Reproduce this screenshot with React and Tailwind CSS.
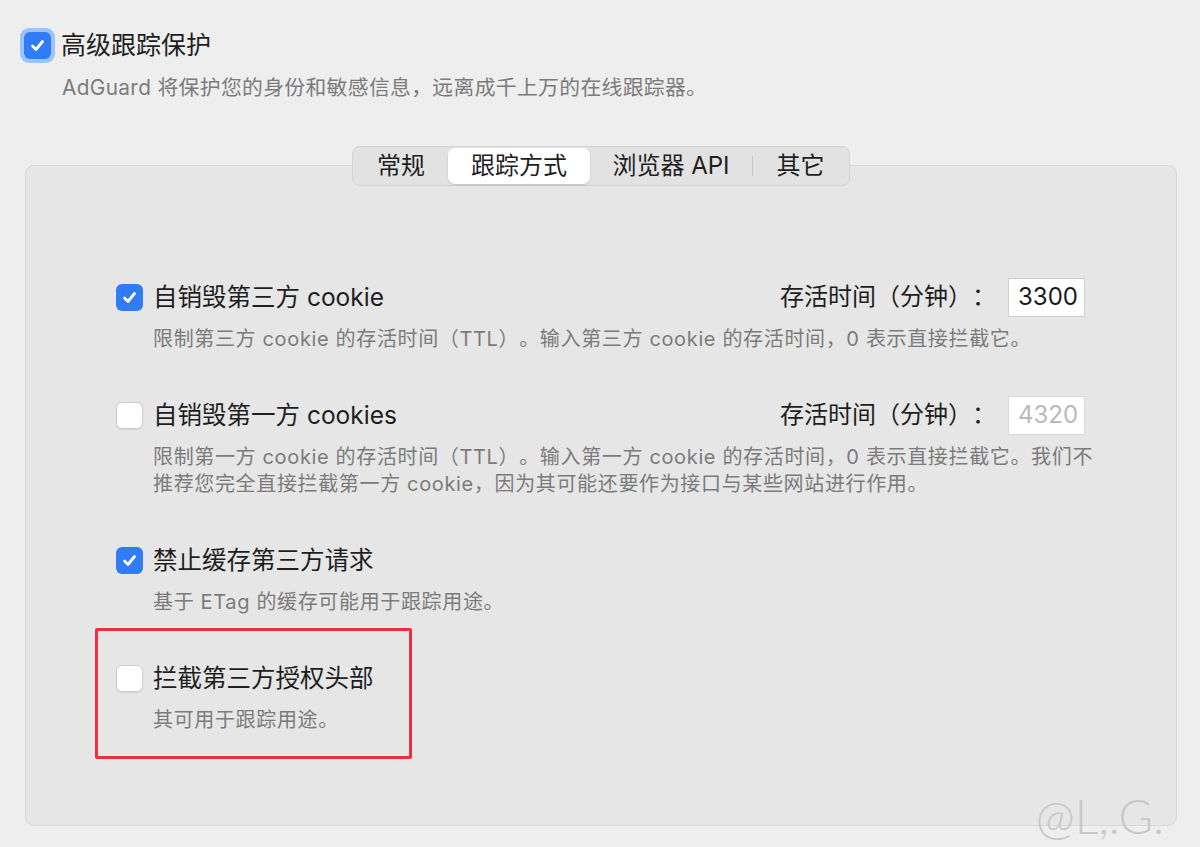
import React from "react";

const FONT = { fontFamily: '"Inter", "Noto Sans CJK SC", sans-serif', textSpacingTrim: "space-all" };

function Check({ checked, focus }) {
  if (checked) {
    return (
      <div className={focus ? "rounded-[9px] bg-[#9cc3fa] p-[4px]" : ""}>
        <div className="flex h-[27px] w-[27px] items-center justify-center rounded-[6px] bg-[#2f7cf6]">
          <svg width="17" height="17" viewBox="0 0 17 17" fill="none">
            <path d="M3.5 9 L7 12.5 L13.5 4.5" stroke="white" strokeWidth="2.8" strokeLinecap="round" strokeLinejoin="round" />
          </svg>
        </div>
      </div>
    );
  }
  return <div className="h-[27px] w-[27px] rounded-[6px] border border-[#cdcdcd] bg-white shadow-[0_0.5px_1px_rgba(0,0,0,0.08)]" />;
}

function Item({ checked, label, desc, ttl, ttlDisabled, children }) {
  return (
    <div className="relative">
      <div className="flex h-[30px] items-center">
        <div className="w-[37px] shrink-0">
          <Check checked={checked} />
        </div>
        <div className="text-[24.5px] leading-[30px] text-[#1e1e1e]">{label}</div>
        {ttl && (
          <div className="ml-auto flex items-center">
            <span className="text-[24px] leading-[30px] text-[#1e1e1e]">存活时间（分钟）：</span>
            <div
              className={
                "ml-[12px] flex h-[39px] w-[77px] shrink-0 items-center border bg-white pl-[9px] text-[24px] " +
                (ttlDisabled ? "border-[#dadada] text-[#b9b9b9]" : "border-[#cfcfcf] text-[#1a1a1a]")
              }
            >
              {ttl}
            </div>
          </div>
        )}
      </div>
      <div className="mt-[14px] pl-[37px] text-[20px] leading-[27px] tracking-[0.65px] text-[#7b7b7b]">{desc}</div>
      {children}
    </div>
  );
}

export default function App() {
  return (
    <div className="relative h-[847px] w-[1200px] overflow-hidden bg-[#eeeeee]" style={FONT}>
      <div className="pl-[20px] pt-[27px]">
        <div className="flex items-center">
          <Check checked focus />
          <span className="ml-[6px] text-[25px] leading-[36px] text-[#1e1e1e]">高级跟踪保护</span>
        </div>
        <div className="ml-[42px] mt-[11px] text-[20.8px] leading-[28px] tracking-[0.35px] text-[#7b7b7b]">
          AdGuard 将保护您的身份和敏感信息，远离成千上万的在线跟踪器。
        </div>
      </div>

      <div className="ml-[25px] mt-[63px] h-[661px] w-[1152px] rounded-[9px] border border-[#d9d9d9] bg-[#e6e6e6]">
        <div className="-mt-[20px] flex justify-center">
          <div className="flex h-[40px] items-center rounded-[8px] border border-[#d3d3d3] bg-[#e2e2e2] px-[1px] text-[24px] text-[#1e1e1e]">
            <div className="flex h-full w-[94px] items-center justify-center">常规</div>
            <div className="flex h-[36px] w-[142px] items-center justify-center rounded-[7px] bg-white shadow-[0_1px_2px_rgba(0,0,0,0.15)]">
              跟踪方式
            </div>
            <div className="flex h-full w-[162px] items-center justify-center">浏览器 API</div>
            <div className="h-[20px] w-px bg-[#c6c6c6]" />
            <div className="flex h-full w-[95px] items-center justify-center">其它</div>
          </div>
        </div>

        <div className="flex flex-col gap-[47px] pl-[90px] pr-[91px] pt-[96px]">
          <Item
            checked
            label="自销毁第三方 cookie"
            ttl="3300"
            desc="限制第三方 cookie 的存活时间（TTL）。输入第三方 cookie 的存活时间，0 表示直接拦截它。"
          />
          <Item
            label="自销毁第一方 cookies"
            ttl="4320"
            ttlDisabled
            desc={
              <>
                <div className="whitespace-nowrap">限制第一方 cookie 的存活时间（TTL）。输入第一方 cookie 的存活时间，0 表示直接拦截它。我们不</div>
                <div className="whitespace-nowrap">推荐您完全直接拦截第一方 cookie，因为其可能还要作为接口与某些网站进行作用。</div>
              </>
            }
          />
          <Item checked label="禁止缓存第三方请求" desc="基于 ETag 的缓存可能用于跟踪用途。" />
          <Item label="拦截第三方授权头部" desc="其可用于跟踪用途。">
            <div className="pointer-events-none absolute left-[-21px] top-[-35px] h-[131px] w-[317px] rounded-[2px] border-[3px] border-[#ef2f3e]" />
          </Item>
        </div>
      </div>

      <div
        className="pointer-events-none absolute right-[36px] top-[788px] text-[47px] font-light leading-[56px] text-[#c8c8c8]"
        style={{ fontFamily: '"Lato", sans-serif' }}
      >
        @L,.G.
      </div>
    </div>
  );
}
